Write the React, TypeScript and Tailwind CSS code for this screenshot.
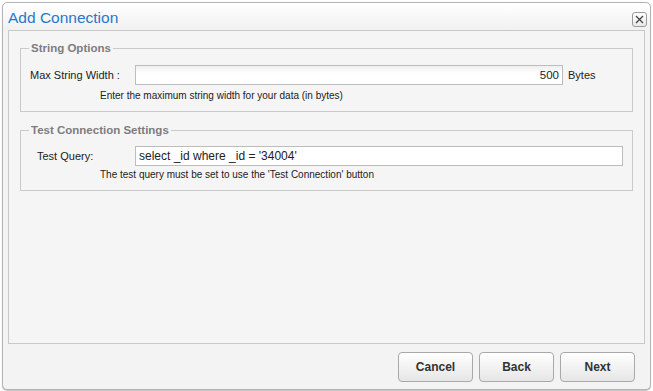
import React from "react";

const font = { fontFamily: '"Liberation Sans", Arial, sans-serif' };

const Fieldset = ({ title, children, className = "" }: { title: string; children: React.ReactNode; className?: string }) => (
  <fieldset className={`mx-[11px] border border-[#cacaca] pl-[8px] pr-[9px] ${className}`}>
    <legend className="px-[2px] text-[11.5px] leading-[14px] font-bold text-[#7d7d7d]">{title}</legend>
    {children}
  </fieldset>
);

export default function App() {
  return (
    <div className="w-[653px] h-[391px] bg-white text-[#222]" style={font}>
      <div className="ml-[2px] pt-[2px]">
        <div className="w-[649px] h-[388px] border border-[#b4b4b4] rounded-[5px] bg-[#f3f3f3] shadow-[0_1px_1px_rgba(0,0,0,0.25)] flex flex-col">
          {/* title bar */}
          <div className="h-[27px] flex items-center justify-between rounded-t-[5px] bg-gradient-to-b from-white to-[#f1f1f1]">
            <span className="ml-[5px] mt-[2px] text-[15.5px] text-[#2479cc] leading-none">Add Connection</span>
            <button className="mr-[3px] mt-[5px] w-[15px] h-[15px] rounded-[3px] border border-[#9a9a9a] bg-gradient-to-b from-white to-[#e9e9e9] flex items-center justify-center">
              <svg width="9" height="9" viewBox="0 0 9 9">
                <path d="M1 1 L8 8 M8 1 L1 8" stroke="#444" strokeWidth="1.3" />
              </svg>
            </button>
          </div>

          {/* content panel */}
          <div className="mx-[5px] h-[314px] border border-[#c9c9c9] bg-[#f5f5f5] flex flex-col">
            <Fieldset title="String Options" className="mt-[10px] pb-[8px]">
              <div className="pl-[1px] pt-[10px] flex items-center">
                <label className="w-[105px] text-[11px]">Max String Width :</label>
                <input
                  readOnly
                  value="500"
                  className="w-[428px] h-[20px] border border-[#bdbdbd] bg-gradient-to-b from-[#eef0ef] to-white to-[40%] text-right pr-[3px] text-[11.5px] outline-none"
                />
                <span className="ml-[5px] text-[11px]">Bytes</span>
              </div>
              <div className="pl-[71px] mt-[4px] text-[10px] leading-[14px]">
                Enter the maximum string width for your data (in bytes)
              </div>
            </Fieldset>

            <Fieldset title="Test Connection Settings" className="mt-[11px] pb-[8px]">
              <div className="pl-[8px] pt-[9px] flex items-center">
                <label className="w-[98px] text-[11px]">Test Query:</label>
                <input
                  readOnly
                  value="select _id where _id = '34004'"
                  className="flex-1 h-[20px] border border-[#bdbdbd] bg-white pl-[3px] text-[12px] outline-none"
                />
              </div>
              <div className="pl-[71px] mt-[2px] text-[10px] leading-[14px]">
                The test query must be set to use the 'Test Connection' button
              </div>
            </Fieldset>
          </div>

          {/* buttons */}
          <div className="mt-[8px] mr-[15px] flex justify-end gap-[6px]">
            {["Cancel", "Back", "Next"].map((b) => (
              <button
                key={b}
                className="w-[75px] h-[30px] rounded-[4px] border border-[#a9a9a9] bg-gradient-to-b from-white to-[#e6e6e6] text-[12px] font-bold text-[#333]"
              >
                {b}
              </button>
            ))}
          </div>
        </div>
      </div>
    </div>
  );
}
